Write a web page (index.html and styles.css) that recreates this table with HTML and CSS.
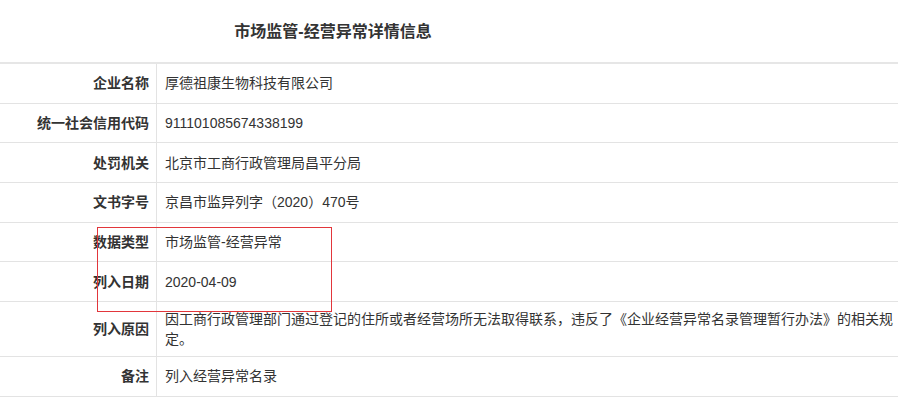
FILE: index.html
```html
<!DOCTYPE html>
<html lang="zh-CN">
<head>
<meta charset="utf-8">
<title>市场监管-经营异常详情信息</title>
<link rel="stylesheet" href="styles.css">
</head>
<body>
<div class="page">
  <div class="title">市场监管-经营异常详情信息</div>
  <div class="table">
    <div class="row"><div class="label">企业名称</div><div class="value">厚德祖康生物科技有限公司</div></div>
    <div class="row"><div class="label">统一社会信用代码</div><div class="value">911101085674338199</div></div>
    <div class="row"><div class="label">处罚机关</div><div class="value">北京市工商行政管理局昌平分局</div></div>
    <div class="row"><div class="label">文书字号</div><div class="value">京昌市监异列字（2020）470号</div></div>
    <div class="row"><div class="label">数据类型</div><div class="value">市场监管-经营异常</div></div>
    <div class="row"><div class="label">列入日期</div><div class="value">2020-04-09</div></div>
    <div class="row"><div class="label">列入原因</div><div class="value">因工商行政管理部门通过登记的住所或者经营场所无法取得联系，违反了《企业经营异常名录管理暂行办法》的相关规定。</div></div>
    <div class="row"><div class="label">备注</div><div class="value">列入经营异常名录</div></div>
  </div>
  <div class="highlight"></div>
</div>
</body>
</html>
```
FILE: styles.css
```css
html, body {
  margin: 0;
  padding: 0;
  background: #ffffff;
}
body {
  font-family: "Liberation Sans", "Noto Sans CJK SC", sans-serif;
  color: #333333;
  font-size: 14px;
  line-height: 20px;
}
.page {
  position: relative;
  width: 898px;
}
.title {
  height: 62px;
  box-sizing: border-box;
  padding-top: 2px;
  padding-left: 4px;
  display: flex;
  align-items: center;
  justify-content: center;
  width: 662px;
  font-size: 16px;
  font-weight: bold;
  color: #333333;
}
.table {
  border-top: 2px solid #e6e6e6;
}
.row {
  display: flex;
  min-height: 39.7px;
  box-sizing: border-box;
  border-bottom: 1px solid #e3e3e3;
}
.label {
  width: 157px;
  flex: none;
  box-sizing: border-box;
  border-right: 1px solid #e3e3e3;
  display: flex;
  align-items: center;
  justify-content: flex-end;
  padding: 7px 7px 7px 8px;
  font-weight: bold;
  color: #333333;
}
.value {
  flex: 1;
  display: flex;
  align-items: center;
  padding: 7px 0 7px 8px;
  color: #333333;
}
.highlight {
  position: absolute;
  left: 97px;
  top: 227px;
  width: 235px;
  height: 85px;
  box-sizing: border-box;
  border: 1px solid #e2363b;
}
```
